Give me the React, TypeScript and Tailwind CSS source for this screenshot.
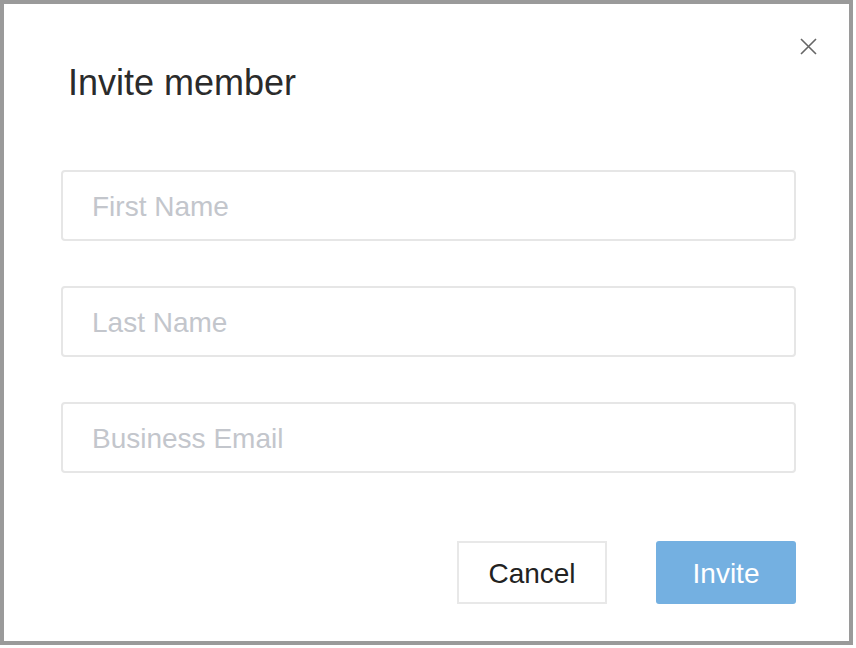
import React from "react";

export default function App() {
  const font = { fontFamily: '"Liberation Sans", Arial, sans-serif' };
  return (
    <div className="w-[856px] h-[648px] bg-white" style={font}>
      <div className="relative w-[853px] h-[645px] border-4 border-[#9a9a9a] bg-white pt-[61px] pl-[57px] pr-[54px]">
        <button className="absolute left-[792px] top-[30px] w-6 h-6 flex items-center justify-center">
          <svg width="17" height="17" viewBox="0 0 17 17">
            <path d="M1 1 L16 16 M16 1 L1 16" stroke="#666" strokeWidth="1.6" fill="none" />
          </svg>
        </button>
        <h1 className="ml-[7px] text-[36px] leading-none text-[#2b2b2b] font-normal">Invite member</h1>
        <div className="mt-[69px] flex flex-col gap-[45px]">
          {["First Name", "Last Name", "Business Email"].map((p) => (
            <input
              key={p}
              placeholder={p}
              className="w-[735px] h-[71px] border-2 border-[#e6e6e6] rounded-[4px] pl-[29px] pt-[3px] text-[28px] text-[#333] placeholder:text-[#c3c6cc] outline-none"
              style={font}
            />
          ))}
        </div>
        <div className="mt-[68px] w-[735px] flex justify-end gap-[49px]">
          <button className="w-[150px] h-[63px] pt-[3px] border-2 border-[#e8e8e8] bg-white text-[28px] text-[#222]" style={font}>
            Cancel
          </button>
          <button className="w-[140px] h-[63px] pt-[3px] rounded-[3px] bg-[#74b0e1] text-[28px] text-white" style={font}>
            Invite
          </button>
        </div>
      </div>
    </div>
  );
}
